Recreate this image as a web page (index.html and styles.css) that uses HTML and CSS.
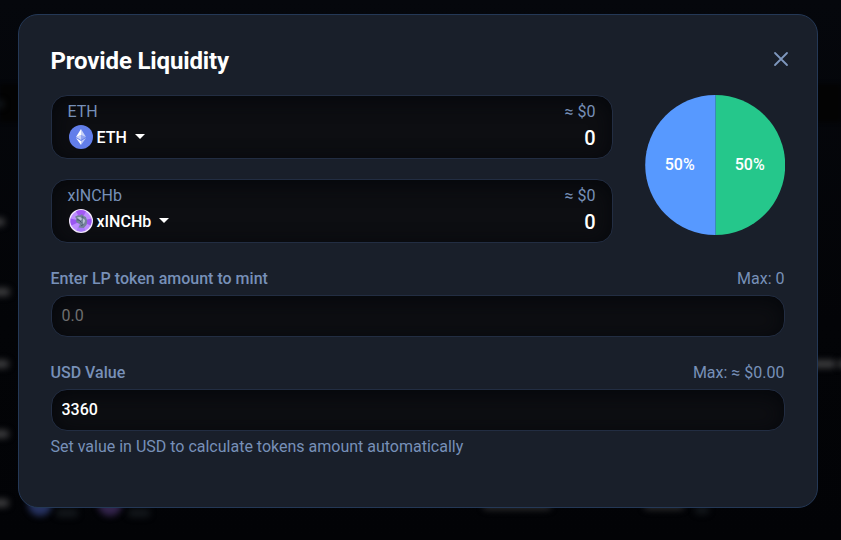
FILE: index.html
```html
<!DOCTYPE html>
<html lang="en">
<head>
    <meta charset="UTF-8">
    <meta name="viewport" content="width=device-width, initial-scale=1.0">
    <title>Provide Liquidity</title>
    <link rel="stylesheet" href="styles.css">
</head>
<body>
    <!-- blurred pool table behind the modal -->
    <div class="backdrop" aria-hidden="true">
        <div class="band"></div>
        <span class="smudge faint s1"></span>
        <span class="smudge s2"></span>
        <span class="smudge s3"></span>
        <span class="smudge s4"></span>
        <span class="smudge s5"></span>
        <span class="smudge s6"></span>
        <span class="smudge s7"></span>
        <span class="smudge s13"></span>
        <span class="coin blue"></span>
        <span class="smudge faint s8"></span>
        <span class="coin purple"></span>
        <span class="smudge faint s9"></span>
        <span class="smudge s10"></span>
        <span class="smudge s11"></span>
        <span class="smudge faint s12"></span>
    </div>

    <div class="modal">
        <div class="modal-header">
            <h2>Provide Liquidity</h2>
            <button class="close" aria-label="Close">
                <svg width="16" height="16" viewBox="0 0 16 16"><path d="M2 2l12 12M14 2L2 14" fill="none" stroke="#7e97bd" stroke-width="1.8" stroke-linecap="round"/></svg>
            </button>
        </div>

        <div class="pool">
            <div class="tokens">
                <div class="token-box">
                    <div class="token-info">
                        <span>ETH</span>
                        <span>≈ $0</span>
                    </div>
                    <div class="token-row">
                        <div class="token-select">
                            <svg width="24" height="24" viewBox="0 0 24 24">
                                <circle cx="12" cy="12" r="12" fill="#627eea"/>
                                <path d="M12 4v5.9l5 2.2z" fill="#fff" opacity=".65"/>
                                <path d="M12 4L7 12.1l5-2.2z" fill="#fff"/>
                                <path d="M12 15.1l5-3-5-2.2z" fill="#fff" opacity=".3"/>
                                <path d="M7 12.1l5 3V9.9z" fill="#fff" opacity=".65"/>
                                <path d="M12 16v4l5-7z" fill="#fff" opacity=".6"/>
                                <path d="M12 20v-4l-5-3z" fill="#fff"/>
                            </svg>
                            <span>ETH</span>
                            <i class="caret"></i>
                        </div>
                        <span class="amount">0</span>
                    </div>
                </div>
                <div class="token-box">
                    <div class="token-info">
                        <span>xINCHb</span>
                        <span>≈ $0</span>
                    </div>
                    <div class="token-row">
                        <div class="token-select">
                            <svg width="24" height="24" viewBox="0 0 24 24">
                                <circle cx="12" cy="12" r="11.3" fill="#bd8cff" stroke="#f1e6fb" stroke-width="1.4"/>
                                <path d="M12 12L7 2.3a10.6 10.6 0 0 1 10 0z" fill="#a458f5"/>
                                <path d="M12 12L1.5 9.5a10.6 10.6 0 0 0 1 7z" fill="#9a56f2"/>
                                <path d="M12 12l10.5-2.5a10.6 10.6 0 0 1-1 7z" fill="#9a56f2"/>
                                <path d="M12 12l4.5 9.6a10.6 10.6 0 0 1-9 0z" fill="#a77bfa"/>
                                <path d="M6 7.8l2.8-1.6 2 .4 2.4-1.6.7 1.5 3 1.6 1.3 3.8-.6 3.9-2.8 3.3-5.2-.6 1.6-3.3-3.1-1.5-1.5-1.8 1.2-1.4z" fill="#74839a"/>
                                <path d="M8 8.3l3.3-.4 1.8 2.2-1.6 1.3zM14.3 8.6l1.8 3.2-1.5 3.7-.8-3z" fill="#b9c5d5"/>
                                <path d="M7.6 10.6l2.8.6 2 2.4M13.2 7.4l1.4 2.1M12.2 16.8l2.2-1.4" fill="none" stroke="#3b4a62" stroke-width=".8"/>
                            </svg>
                            <span>xINCHb</span>
                            <i class="caret"></i>
                        </div>
                        <span class="amount">0</span>
                    </div>
                </div>
            </div>

            <svg class="pie" width="140" height="140" viewBox="0 0 140 140">
                <path d="M70.2 0a70 70 0 0 0 0 140z" fill="#5799ff"/>
                <path d="M70.2 0a70 70 0 0 1 0 140z" fill="#25c78b"/>
                <path d="M70.5 0v140" stroke="#3a8bb5"/>
                <text x="34.7" y="75">50%</text>
                <text x="104.7" y="75">50%</text>
            </svg>
        </div>

        <div class="field">
            <div class="field-head">
                <label for="lp">Enter LP token amount to mint</label>
                <span>Max: 0</span>
            </div>
            <input type="text" id="lp" placeholder="0.0">
        </div>

        <div class="field">
            <div class="field-head">
                <label for="usd">USD Value</label>
                <span>Max: ≈ $0.00</span>
            </div>
            <input type="text" id="usd" value="3360">
            <p class="hint">Set value in USD to calculate tokens amount automatically</p>
        </div>
    </div>
</body>
</html>
```
FILE: styles.css
```css
* {
    box-sizing: border-box;
}
body {
    margin: 0;
    height: 540px;
    padding: 14px 0 0 17.5px;
    overflow: hidden;
    background: #040509;
    color: #fff;
    font-family: Roboto, "Liberation Sans", sans-serif;
    font-size: 16px;
    line-height: 24px;
}
.backdrop {
    position: absolute;
    inset: 0;
    overflow: hidden;
    background: linear-gradient(#05070c, #030407 60%, #020306);
}
.band {
    position: absolute;
    top: 84px;
    left: 0;
    right: 0;
    height: 38px;
    background: #030303;
    filter: blur(2px);
}
.smudge {
    position: absolute;
    height: 8px;
    border-radius: 4px;
    background: #3c3c3e;
    filter: blur(3px);
}
.faint {
    background: #13171b;
}
.s1 { left: -4px; top: 100px; width: 8px; }
.s2 { left: -8px; top: 218px; width: 13px; }
.s3 { left: -8px; top: 288px; width: 18px; }
.s4 { left: -8px; top: 360px; width: 17px; }
.s5 { left: -8px; top: 430px; width: 17px; }
.s6 { left: -8px; top: 499px; width: 17px; }
.s7 { left: 812px; top: 360px; width: 24px; }
.s8 { left: 56px; top: 509px; width: 22px; }
.s9 { left: 128px; top: 509px; width: 22px; }
.s10 { left: 483px; top: 502px; width: 68px; background: #28282a; }
.s11 { left: 644px; top: 502px; width: 40px; background: #28282a; }
.s12 { left: 695px; top: 506px; width: 14px; }
.s13 { left: 838px; top: 360px; width: 14px; }
.coin {
    position: absolute;
    top: 492px;
    width: 24px;
    height: 24px;
    border-radius: 50%;
    filter: blur(3px);
}
.blue { left: 28px; background: #263260; }
.purple { left: 98px; background: #33244c; }

.modal {
    position: relative;
    width: 800px;
    height: 494px;
    padding: 32px;
    border: 1px solid #243856;
    border-radius: 20px;
    background: #191f2a;
}
.modal-header {
    display: flex;
    justify-content: space-between;
    height: 28px;
    margin-bottom: 20px;
}
h2 {
    margin: 0;
    font-size: 24px;
    line-height: 28px;
    font-weight: 700;
    letter-spacing: -0.15px;
}
.close {
    display: flex;
    align-items: center;
    height: 24px;
    margin-right: -4px;
    padding: 0;
    border: 0;
    background: none;
}
.pool {
    display: flex;
    justify-content: space-between;
    margin-bottom: 24px;
}
.tokens {
    display: flex;
    flex-direction: column;
    gap: 20px;
    width: 562px;
}
.token-box,
input {
    border: 1px solid #222d42;
    border-radius: 16px;
    background: #0d0e12;
    box-shadow: inset 0 4px 20px #05070b;
}
.token-box {
    height: 64px;
    padding: 4px 16px 0;
}
.token-info,
.token-row,
.field-head {
    display: flex;
    justify-content: space-between;
    color: #7790b8;
}
.token-row {
    align-items: center;
    height: 28px;
    color: #fff;
}
.token-select {
    display: flex;
    align-items: center;
    gap: 4px;
    margin: -2px 0 0 1px;
    font-weight: 500;
}
.token-select span {
    padding-top: 1px;
}
.caret {
    margin: -1px 0 0 4px;
    border: 5px solid transparent;
    border-top-color: #fff;
    border-bottom: 0;
}
.amount {
    font-size: 20px;
    font-weight: 500;
}
.pie text {
    fill: #fff;
    font-weight: 500;
    text-anchor: middle;
}
.field {
    margin-bottom: 24px;
}
.field-head {
    margin-bottom: 4px;
}
label {
    font-weight: 500;
}
input {
    display: block;
    width: 100%;
    height: 42px;
    padding: 0 10px 2px;
    color: #fff;
    font: 500 16px Roboto, "Liberation Sans", sans-serif;
}
input::placeholder {
    color: #6f6f6f;
    font-weight: 400;
}
.hint {
    margin: 4px 0 0;
    color: #7790b8;
}
```
